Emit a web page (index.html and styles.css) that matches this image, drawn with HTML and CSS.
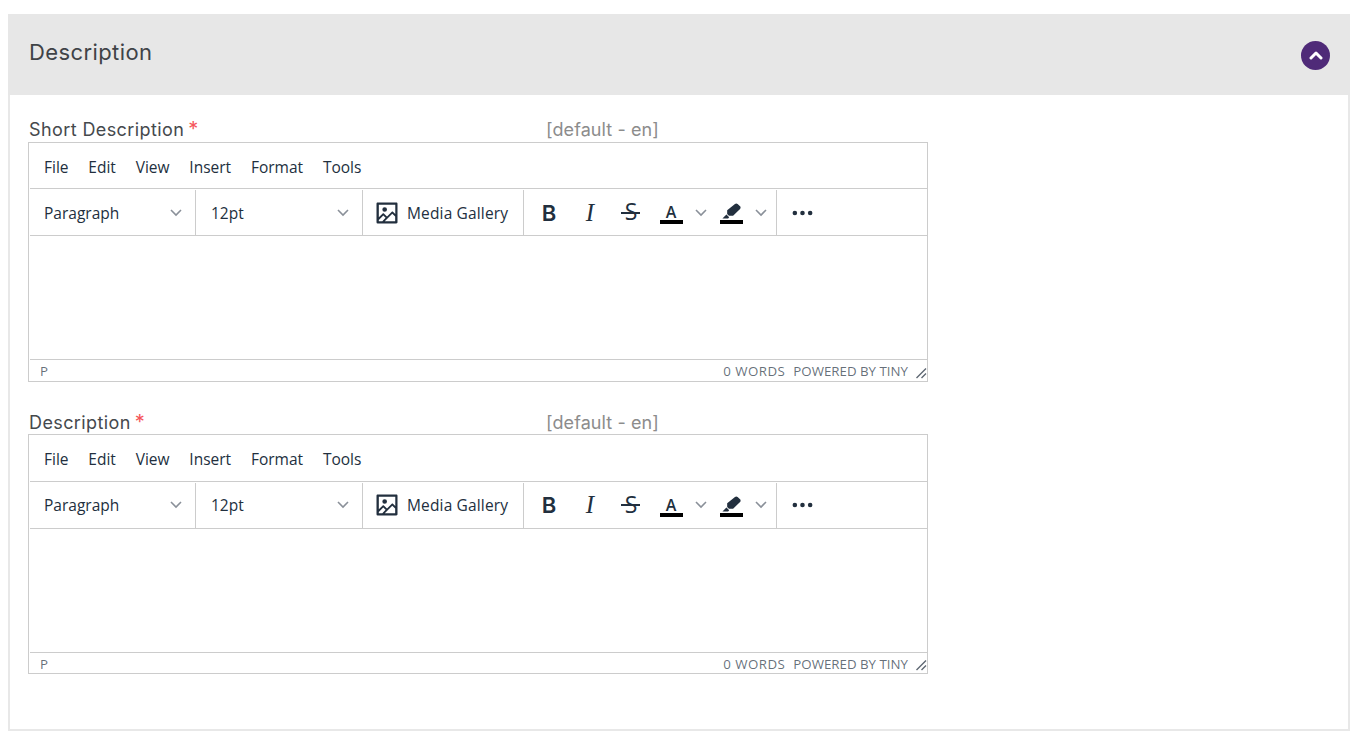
FILE: index.html
```html
<!DOCTYPE html>
<html lang="en">
<head>
<meta charset="utf-8">
<title>Description</title>
<link rel="stylesheet" href="styles.css">
</head>
<body>
<section class="panel">
  <header class="panel-head">
    <h2 class="panel-title">Description</h2>
    <button class="collapse" aria-label="Collapse">
      <svg viewBox="0 0 14 10" width="14" height="10"><path d="M2 8l5-5 5 5" fill="none" stroke="#fff" stroke-width="3" stroke-linecap="round" stroke-linejoin="round"/></svg>
    </button>
  </header>
  <div class="panel-body">
    <div class="field">
      <div class="field-label">
        <label class="label-name">Short Description<span class="req">*</span></label>
        <span class="locale">[default - en]</span>
      </div>
      <div class="editor">
        <div class="menubar"><span>File</span><span>Edit</span><span>View</span><span>Insert</span><span>Format</span><span>Tools</span></div>
        <div class="toolbar">
          <div class="tgroup select"><span>Paragraph</span><svg class="chev" viewBox="0 0 12 8"><path d="M1 1l5 5 5-5"/></svg></div>
          <div class="tgroup select s2"><span>12pt</span><svg class="chev" viewBox="0 0 12 8"><path d="M1 1l5 5 5-5"/></svg></div>
          <div class="tgroup media">
            <svg class="ico" viewBox="0 0 24 24"><path d="M5 15.7l3.3-3.2c.3-.3.7-.3 1 0L12 15l4.1-4c.3-.4.8-.4 1 0l2 1.9V5H5v10.7zM5 18V19h3l2.8-2.9-2-2L5 17.9zm14-3l-2.5-2.4-6.4 6.5H19v-4zM4 3h16c.6 0 1 .4 1 1v16c0 .6-.4 1-1 1H4a1 1 0 0 1-1-1V4c0-.6.4-1 1-1zm6 8a2 2 0 1 0 0-4 2 2 0 0 0 0 4z"/></svg>
            <span class="media-text">Media Gallery</span>
          </div>
          <div class="tgroup format">
            <span class="tbtn bold">B</span>
            <span class="tbtn ital">I</span>
            <span class="tbtn strike">S</span>
            <span class="split">
              <span class="swatch"><span class="letter">A</span><i class="bar"></i></span>
              <svg class="chev" viewBox="0 0 12 8"><path d="M1 1l5 5 5-5"/></svg>
            </span>
            <span class="split">
              <span class="swatch">
                <svg class="pen" viewBox="0 0 18 15"><path d="M12.3.9c.7-.7 1.8-.7 2.5 0l2.3 2.2c.7.7.7 1.8 0 2.4L10.5 12H6.6L4.9 10.3V6.7zM4.2 10.9l2.6 2.5-1 1.1H.4z"/></svg>
                <i class="bar"></i>
              </span>
              <svg class="chev" viewBox="0 0 12 8"><path d="M1 1l5 5 5-5"/></svg>
            </span>
          </div>
          <div class="tgroup more">
            <span class="tbtn"><svg class="dots" viewBox="0 0 22 6"><circle cx="3" cy="3" r="2.4"/><circle cx="11" cy="3" r="2.4"/><circle cx="19" cy="3" r="2.4"/></svg></span>
          </div>
        </div>
        <div class="edit-area"></div>
        <div class="statusbar">
          <span class="path">P</span>
          <span class="status-right">0 WORDS</span>
          <span class="status-brand">POWERED BY TINY</span>
          <svg class="grip" viewBox="0 0 12 12"><path d="M11 1.5L1.5 11M11 6.5L6.5 11"/></svg>
        </div>
      </div>
    </div>
    <div class="field">
      <div class="field-label">
        <label class="label-name">Description<span class="req">*</span></label>
        <span class="locale">[default - en]</span>
      </div>
      <div class="editor">
        <div class="menubar"><span>File</span><span>Edit</span><span>View</span><span>Insert</span><span>Format</span><span>Tools</span></div>
        <div class="toolbar">
          <div class="tgroup select"><span>Paragraph</span><svg class="chev" viewBox="0 0 12 8"><path d="M1 1l5 5 5-5"/></svg></div>
          <div class="tgroup select s2"><span>12pt</span><svg class="chev" viewBox="0 0 12 8"><path d="M1 1l5 5 5-5"/></svg></div>
          <div class="tgroup media">
            <svg class="ico" viewBox="0 0 24 24"><path d="M5 15.7l3.3-3.2c.3-.3.7-.3 1 0L12 15l4.1-4c.3-.4.8-.4 1 0l2 1.9V5H5v10.7zM5 18V19h3l2.8-2.9-2-2L5 17.9zm14-3l-2.5-2.4-6.4 6.5H19v-4zM4 3h16c.6 0 1 .4 1 1v16c0 .6-.4 1-1 1H4a1 1 0 0 1-1-1V4c0-.6.4-1 1-1zm6 8a2 2 0 1 0 0-4 2 2 0 0 0 0 4z"/></svg>
            <span class="media-text">Media Gallery</span>
          </div>
          <div class="tgroup format">
            <span class="tbtn bold">B</span>
            <span class="tbtn ital">I</span>
            <span class="tbtn strike">S</span>
            <span class="split">
              <span class="swatch"><span class="letter">A</span><i class="bar"></i></span>
              <svg class="chev" viewBox="0 0 12 8"><path d="M1 1l5 5 5-5"/></svg>
            </span>
            <span class="split">
              <span class="swatch">
                <svg class="pen" viewBox="0 0 18 15"><path d="M12.3.9c.7-.7 1.8-.7 2.5 0l2.3 2.2c.7.7.7 1.8 0 2.4L10.5 12H6.6L4.9 10.3V6.7zM4.2 10.9l2.6 2.5-1 1.1H.4z"/></svg>
                <i class="bar"></i>
              </span>
              <svg class="chev" viewBox="0 0 12 8"><path d="M1 1l5 5 5-5"/></svg>
            </span>
          </div>
          <div class="tgroup more">
            <span class="tbtn"><svg class="dots" viewBox="0 0 22 6"><circle cx="3" cy="3" r="2.4"/><circle cx="11" cy="3" r="2.4"/><circle cx="19" cy="3" r="2.4"/></svg></span>
          </div>
        </div>
        <div class="edit-area"></div>
        <div class="statusbar">
          <span class="path">P</span>
          <span class="status-right">0 WORDS</span>
          <span class="status-brand">POWERED BY TINY</span>
          <svg class="grip" viewBox="0 0 12 12"><path d="M11 1.5L1.5 11M11 6.5L6.5 11"/></svg>
        </div>
      </div>
    </div>
  </div>
</section>
</body>
</html>
```
FILE: styles.css
```css
* { box-sizing: border-box; }
html, body { margin: 0; background: #fff; }
body { padding: 14px 12px 8px 8px; overflow: hidden; }

.panel { width: 1342px; }
.panel-head {
  height: 81px;
  background: #e7e7e7;
  display: flex;
  align-items: center;
  justify-content: space-between;
  padding: 0 20px 0 21px;
}
.panel-title {
  margin: 0 0 5px;
  font: 400 22px/30px Inter, sans-serif;
  letter-spacing: 0.4px;
  color: #3f4347;
}
.collapse {
  width: 29px;
  height: 29px;
  margin-top: 1px;
  padding: 0;
  border: 0;
  border-radius: 50%;
  background: #4f2a78;
  display: flex;
  align-items: center;
  justify-content: center;
}
.panel-body {
  border: 2px solid #e8e8e8;
  border-top: 0;
  padding: 23px 18px 54.5px;
}
.field + .field { margin-top: 29px; }
.field + .field .field-label { height: 23.25px; }
.field-label {
  width: 900px;
  height: 23.9px;
  display: flex;
  font: 400 18px/24px Inter, sans-serif;
  color: #45494d;
}
.label-name { width: 518px; padding-left: 1px; letter-spacing: 0.4px; }
.req { color: #f5565b; margin-left: 4px; font-size: 20px; line-height: 20px; }
.locale { color: #8c8c8c; letter-spacing: 0.1px; }

.editor {
  width: 900px;
  border: 1px solid #ccc;
  font-family: "Open Sans", sans-serif;
  color: #222f3e;
}
.menubar {
  height: 45.3px;
  display: flex;
  align-items: center;
  gap: 19.8px;
  padding: 2px 0 0 15px;
  font-size: 15.5px;
}
.toolbar {
  height: 47px;
  margin-left: 1px;
  border-top: 1px solid #ccc;
  display: flex;
  font-size: 15.5px;
}
.tgroup {
  display: flex;
  align-items: center;
  margin-top: 1px;
  border-right: 1px solid #ccc;
  flex: none;
}
.select {
  width: 166px;
  padding: 0 13px 0 14px;
  justify-content: space-between;
}
.select.s2 { width: 167px; padding-left: 15px; }
.media { width: 161px; padding-left: 10px; gap: 6px; }
.media-text { letter-spacing: 0.15px; }
.format { width: 253px; padding-left: 5px; gap: 1px; }
.more { border-right: 0; padding-left: 5px; }
.tbtn {
  position: relative;
  width: 40px;
  height: 34px;
  display: flex;
  align-items: center;
  justify-content: center;
  line-height: 1;
}
.bold { font: 600 22px/1 Inter, sans-serif; }
.ital { font: italic 400 25px/1 "Liberation Serif", serif; padding-bottom: 1px; }
.strike { font: 500 23px/1 "Open Sans", sans-serif; padding-bottom: 2px; }
.strike::after {
  content: "";
  position: absolute;
  left: 10px;
  right: 11px;
  top: 16px;
  height: 2px;
  background: #222f3e;
}
.split {
  width: 59px;
  display: flex;
  align-items: center;
  padding-left: 5px;
  gap: 10px;
}
.swatch {
  position: relative;
  width: 28px;
  height: 24px;
  flex: none;
  display: flex;
  justify-content: center;
  margin-bottom: 1px;
}
.letter {
  font: 600 16px/18px "Open Sans", sans-serif;
  margin-top: 3px;
}
.pen { width: 19px; height: 16px; margin-top: 3px; fill: #222f3e; }
.bar {
  position: absolute;
  left: 3px;
  right: 2px;
  bottom: 0;
  height: 4px;
  background: #000;
}
.ico { width: 28px; height: 28px; fill: #222f3e; flex: none; }
.dots { width: 21px; height: 6px; fill: #222f3e; }
.chev {
  width: 12px;
  height: 8px;
  flex: none;
  fill: none;
  stroke: #8a9099;
  stroke-width: 1.6;
}
.edit-area { height: 124px; border-top: 1px solid #ccc; margin-left: 1px; }
.statusbar {
  height: 21.85px;
  margin-left: 1px;
  border-top: 1px solid #ccc;
  display: flex;
  align-items: center;
  padding: 1px 0 0 10px;
  font-size: 13.3px;
  color: rgba(34, 47, 62, 0.7);
}
.status-right { margin-left: auto; letter-spacing: 0.45px; }
.status-brand { margin-left: 8px; }
.grip {
  width: 12px;
  height: 12px;
  margin: 3px 0 0 7px;
  fill: none;
  stroke: #5f6873;
  stroke-width: 1.4;
}
```
